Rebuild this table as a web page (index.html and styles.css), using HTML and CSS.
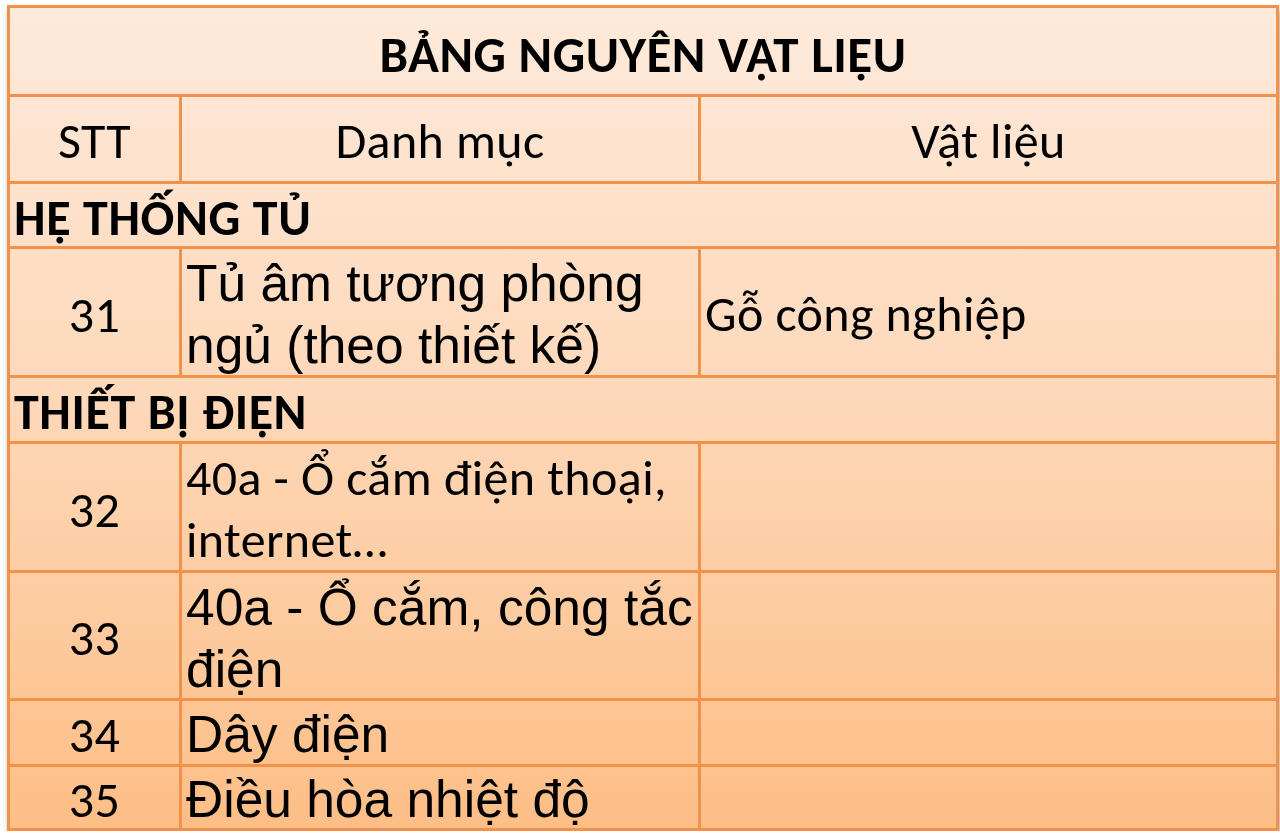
FILE: index.html
```html
<!DOCTYPE html>
<html lang="vi">
<head>
<meta charset="utf-8">
<title>Bảng nguyên vật liệu</title>
<link rel="stylesheet" href="styles.css">
</head>
<body>
<div class="page">
  <div class="sheet">
    <div class="cell title span3">BẢNG NGUYÊN VẬT LIỆU</div>

    <div class="cell head">STT</div>
    <div class="cell head">Danh mục</div>
    <div class="cell head">Vật liệu</div>

    <div class="cell section span3">HỆ THỐNG TỦ</div>

    <div class="cell num">31</div>
    <div class="cell ar two">Tủ âm tương phòng<br>ngủ (theo thiết kế)</div>
    <div class="cell cb mat">Gỗ công nghiệp</div>

    <div class="cell section span3">THIẾT BỊ ĐIỆN</div>

    <div class="cell num">32</div>
    <div class="cell cb two">40a - Ổ cắm điện thoại,<br>internet…</div>
    <div class="cell"></div>

    <div class="cell num">33</div>
    <div class="cell ar two">40a - Ổ cắm, công tắc<br>điện</div>
    <div class="cell"></div>

    <div class="cell num">34</div>
    <div class="cell ar one">Dây điện</div>
    <div class="cell"></div>

    <div class="cell num">35</div>
    <div class="cell ar one">Điều hòa nhiệt độ</div>
    <div class="cell"></div>
  </div>
</div>
</body>
</html>
```

FILE: styles.css
```css
html, body {
  margin: 0;
  padding: 0;
  background: #ffffff;
}

.page {
  padding: 5px 0 0 7px;
}

.sheet {
  width: 1272px;
  box-sizing: border-box;
  display: grid;
  grid-template-columns: 172px 519px 578px;
  grid-template-rows: 89px 87px 65px 129px 66px 129px 128px 66px 64px;
  border-top: 3px solid #f29149;
  border-left: 3px solid #f29149;
  background: linear-gradient(180deg, #feeadb 0%, #fdd9bb 45%, #fdbe86 100%);
  box-shadow: 2px 5px 7px rgba(0, 0, 0, 0.35);
  color: #000;
}

.cell {
  box-sizing: border-box;
  border-right: 3px solid #f29149;
  border-bottom: 3px solid #f29149;
  display: flex;
  align-items: center;
  overflow: visible;
  white-space: nowrap;
  font-family: Carlito, Lato, sans-serif;
  font-size: 50px;
  letter-spacing: 0.4px;
}

.span3 {
  grid-column: 1 / 4;
}

.title {
  justify-content: center;
  font-weight: bold;
  font-size: 51px;
  letter-spacing: 0.5px;
  padding-top: 6px;
}

.head {
  justify-content: center;
  padding-top: 2px;
}

.section {
  font-weight: bold;
  letter-spacing: 0.6px;
  padding-left: 4px;
  padding-top: 4px;
}

.num {
  justify-content: center;
  padding-top: 4px;
}

.ar {
  font-family: "Liberation Sans", Arial, sans-serif;
  font-size: 51.5px;
  letter-spacing: 0;
  padding-left: 4px;
}

.cb {
  padding-left: 4px;
}

.two {
  line-height: 62px;
  align-items: flex-start;
  padding-top: 3px;
}

.one {
  line-height: 62px;
  padding-top: 2px;
}

.mat {
  padding-left: 4px;
  padding-top: 2px;
}
```
